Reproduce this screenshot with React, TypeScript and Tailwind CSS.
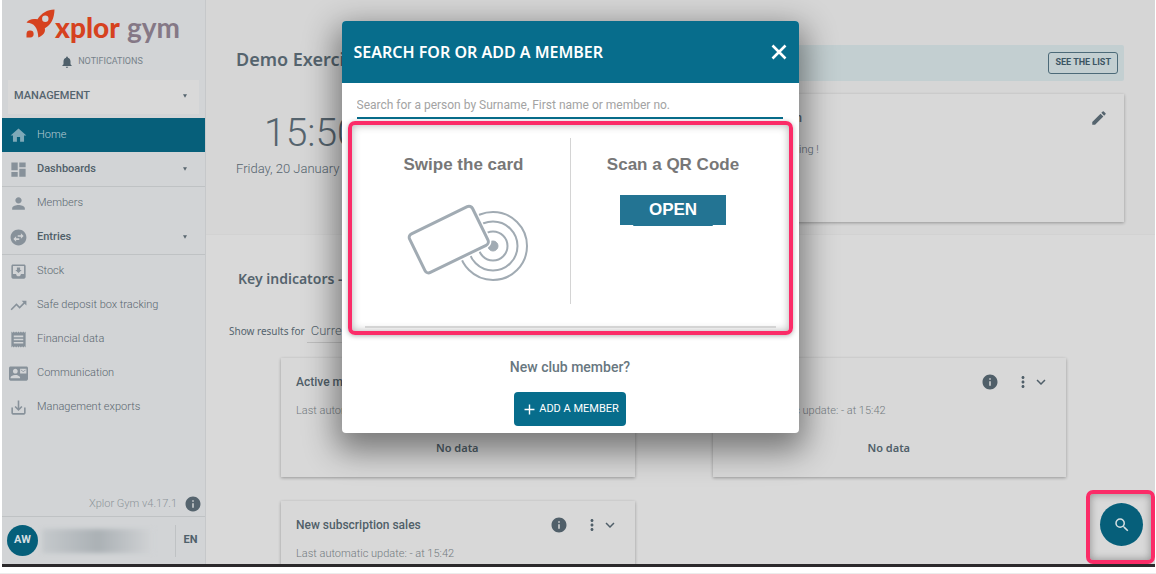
import type { ReactNode } from 'react'
import type { IconType } from 'react-icons'
import {
  MdAdd,
  MdContactMail,
  MdDashboard,
  MdEdit,
  MdExpandMore,
  MdHome,
  MdInfo,
  MdMoreVert,
  MdMoveToInbox,
  MdNotifications,
  MdPerson,
  MdReceipt,
  MdSaveAlt,
  MdSearch,
  MdSwapHorizontalCircle,
  MdTrendingUp,
} from 'react-icons/md'

type NavItem = {
  label: string
  icon: IconType
  active?: boolean
  expandable?: boolean
}

const navGroups: NavItem[][] = [
  [
    { label: 'Home', icon: MdHome, active: true },
    { label: 'Dashboards', icon: MdDashboard, expandable: true },
  ],
  [
    { label: 'Members', icon: MdPerson },
    { label: 'Entries', icon: MdSwapHorizontalCircle, expandable: true },
  ],
  [
    { label: 'Stock', icon: MdMoveToInbox },
    { label: 'Safe deposit box tracking', icon: MdTrendingUp },
    { label: 'Financial data', icon: MdReceipt },
    { label: 'Communication', icon: MdContactMail },
    { label: 'Management exports', icon: MdSaveAlt },
  ],
]

function Caret() {
  return (
    <svg viewBox="0 0 6 5" className="mr-[6px] size-1 shrink-0" fill="currentColor">
      <path d="M0 0h6L3 5z" />
    </svg>
  )
}

function Logo() {
  return (
    <div className="flex h-12 items-start pl-[23px]">
      <svg viewBox="0 0 30 30" className="mt-[9px] size-[30px] shrink-0">
        <path
          fill="#d6421f"
          fillRule="evenodd"
          d="M29.5 .5C22 .8 16.500 4 12.500 10.300C7.500 9.500 3.500 10.300 1.500 13.800C8.500 13.500 13 18.500 13.300 28.500C18 26.500 20.800 23.500 19.800 19.200C26.500 15.500 29.300 9 29.500 .5ZM20.300 6.600a3.200 3.200 0 1 1 0 6.400 3.200 3.200 0 0 1 0-6.400Z"
        />
        <path fill="#d6421f" d="M5.200 21.600A3.400 3.400 0 0 1 5.200 28.500H1.500V25A3.500 3.500 0 0 1 5.200 21.600Z" />
      </svg>
      <span className="mt-[10px] whitespace-nowrap font-['Lato'] text-[28px] leading-[34px] text-[#857886]">
        <span className="font-black text-[#d6421f]">xplor</span> <span className="font-bold">gym</span>
      </span>
    </div>
  )
}

function NavLink({ item }: { item: NavItem }) {
  const Icon = item.icon
  return (
    <li>
      <a
        href="#"
        className={
          item.active
            ? 'flex h-[34px] items-center bg-[#065f7a] pl-[7px] pr-3 text-[#b9cdd4]'
            : 'flex h-[34px] items-center pl-[7px] pr-3 text-[#5a6770]'
        }
      >
        <Icon className={item.active ? 'mr-[9px] size-[19px] text-[#7fa9b8]' : 'mr-[9px] size-[19px] text-[#87919a]'} />
        <span className={item.expandable ? 'flex-1 font-medium text-[#505f69]' : 'flex-1 font-light'}>{item.label}</span>
        {item.expandable && <Caret />}
      </a>
    </li>
  )
}

function Sidebar() {
  return (
    <aside className="flex w-[204px] shrink-0 flex-col border-r border-[#c6c8ca] bg-[#d2d4d6] text-[11px] text-[#55646e]">
      <Logo />
      <a href="#" className="flex h-7 items-center justify-center gap-1 pr-1 text-[9px] text-[#77828a]">
        <MdNotifications className="size-[14px] text-[#4f606b]" />
        NOTIFICATIONS
      </a>
      <button className="mx-[6px] mt-1 flex h-[34px] items-center justify-between bg-[#d9d9d9] pr-[6px] pb-[2px] pl-[6px] font-medium">
        MANAGEMENT
        <Caret />
      </button>
      <nav className="mt-1">
        {navGroups.map((group, i) => (
          <ul key={i} className="shadow-[0_1px_0_#bfc2c4] last:shadow-none">
            {group.map(item => (
              <NavLink key={item.label} item={item} />
            ))}
          </ul>
        ))}
      </nav>
      <div className="mt-auto flex h-6 items-center justify-end gap-[7px] pr-[3px] font-light text-[#8d949a]">
        Xplor Gym v4.17.1
        <MdInfo className="size-[18px] text-[#55646e]" />
      </div>
      <div className="flex h-12 shrink-0 items-center border-t border-[#bfc2c4] pl-[5px] text-[#4f606b]">
        <span className="flex size-[31px] items-center justify-center rounded-full bg-[#065f7a] font-bold text-[#d5dfe2]">
          AW
        </span>
        <span className="ml-1 h-6 w-28 bg-linear-to-r from-[#c5c9cc] via-[#abb1b5] to-[#d2d4d6] blur-[2px]" />
        <span className="ml-auto flex h-8 w-[30px] items-center justify-center border-l border-[#bfc2c4] font-bold">
          EN
        </span>
      </div>
    </aside>
  )
}

function IndicatorCard({ title, children }: { title: string; children?: ReactNode }) {
  return (
    <section className="h-[119px] bg-[#d8d8d8] pt-[14px] pr-4 pl-[15px] shadow-[0_1px_3px_rgba(0,0,0,0.3)]">
      <div className="flex h-5 items-center text-[#505f69]">
        <h3 className="mr-auto text-xs font-medium">{title}</h3>
        <button aria-label="Information">
          <MdInfo className="size-[18px]" />
        </button>
        <button aria-label="Options" className="ml-[15px]">
          <MdMoreVert className="size-[18px]" />
        </button>
        <button aria-label="Expand">
          <MdExpandMore className="size-[18px]" />
        </button>
      </div>
      <p className="mt-[11px] text-[11px] leading-4 font-light text-[#737b80]">Last automatic update: - at 15:42</p>
      {children}
    </section>
  )
}

function NoData() {
  return <p className="mt-[21px] text-center font-['Noto_Sans'] text-[11px] leading-4 font-semibold text-[#505f69]">No data</p>
}

function Dashboard() {
  return (
    <main className="flex min-w-0 flex-1 flex-col overflow-hidden bg-[#d9d9d9] text-[#55646e]">
      <div className="flex h-[235px] shrink-0 justify-between border-b border-[#d2d2d2] bg-[#d6d6d6] pr-[31px] pl-[30px]">
        <div className="whitespace-nowrap pt-[47px]">
          <h1 className="font-['Noto_Sans'] text-lg leading-6 font-semibold">Demo Exercise</h1>
          <p className="mt-9 pl-7 text-[39px] leading-[52px] font-light">15:50</p>
          <p className="text-[13px] leading-5 font-light">Friday, 20 January 2023</p>
        </div>
        <div className="flex w-[57%] flex-col pt-[45px]">
          <div className="flex h-9 items-center justify-end rounded-xs bg-[#c3cfd1] pr-[6px]">
            <button className="h-[22px] rounded-[3px] border border-[#4c6a78] px-[6px] text-[9px] font-bold text-[#3c5563]">
              SEE THE LIST
            </button>
          </div>
          <section className="mt-[13px] h-32 bg-[#d8d8d8] pt-[14px] pr-4 shadow-[0_1px_3px_rgba(0,0,0,0.3)]">
            <div className="flex h-5 items-center">
              <h2 className="w-[184px] text-right text-xs font-medium">Information</h2>
              <button aria-label="Edit" className="ml-auto">
                <MdEdit className="size-[18px]" />
              </button>
            </div>
            <p className="mt-3 w-[201px] text-right text-[11px] leading-5 font-light">Good morning !</p>
          </section>
        </div>
      </div>
      <h2 className="mt-8 ml-8 shrink-0 font-['Noto_Sans'] text-sm leading-6 font-semibold">Key indicators - my club</h2>
      <div className="mt-7 ml-[23px] flex h-6 shrink-0 items-center gap-[2px] font-['Noto_Sans'] text-[10px]">
        <label htmlFor="period">Show results for</label>
        <select id="period" className="h-6 w-40 appearance-none border-b border-[#bdbdbd] px-1 font-['Roboto'] text-[13px] font-light">
          <option>Current month</option>
        </select>
      </div>
      <div className="mt-[15px] mr-[89px] ml-[75px] grid grid-cols-2 gap-x-[78px] gap-y-6">
        <IndicatorCard title="Active members">
          <NoData />
        </IndicatorCard>
        <IndicatorCard title="Contracts">
          <NoData />
        </IndicatorCard>
        <IndicatorCard title="New subscription sales" />
      </div>
    </main>
  )
}

function SwipeCardDrawing() {
  return (
    <svg viewBox="0 0 124 80" className="h-20 w-[124px]" fill="none" stroke="#a1abb3">
      <circle cx="88" cy="43" r="5" fill="#a1abb3" />
      <circle cx="88" cy="43" r="14.500" strokeWidth="2" />
      <circle cx="88" cy="43" r="24.500" strokeWidth="2" />
      <circle cx="88" cy="43" r="34" strokeWidth="2" />
      <rect x="9" y="15" width="70" height="43" rx="4" stroke="#fff" strokeWidth="6" fill="#fff" transform="rotate(-26 44 37)" />
      <rect x="9" y="15" width="70" height="43" rx="4" strokeWidth="3" fill="#fff" transform="rotate(-26 44 37)" />
    </svg>
  )
}

function MemberDialog() {
  return (
    <div
      role="dialog"
      aria-labelledby="member-dialog-title"
      className="absolute top-[21px] left-1/2 w-[457px] -translate-x-[237px] rounded-[4px] bg-white font-['Roboto'] shadow-[0_12px_32px_6px_rgba(0,0,0,0.45)]"
    >
      <header className="flex h-[62px] items-center justify-between rounded-t-[4px] bg-[#076d8c] pr-2 pl-3 text-white">
        <h2 id="member-dialog-title" className="font-['Noto_Sans'] text-base font-semibold">
          SEARCH FOR OR ADD A MEMBER
        </h2>
        <button aria-label="Close">
          <svg viewBox="0 0 24 24" className="size-6" stroke="currentColor" strokeWidth="2.6">
            <path d="M5.500 5.500l13 13M18.500 5.500l-13 13" />
          </svg>
        </button>
      </header>
      <input
        aria-label="Search for a member"
        placeholder="Search for a person by Surname, First name or member no."
        className="mx-[15px] mt-[9px] block h-[27px] w-[426px] border-b-2 border-[#076d8c] text-xs placeholder:text-[#a3a3a3]"
      />
      <div className="mx-[6px] mt-[2px] flex h-[214px] flex-col rounded-[7px] border-4 border-[#fb2c68] px-[13px] pt-[13px] font-['Liberation_Sans'] shadow-[inset_0_0_9px_rgba(0,0,0,0.3),0_1px_5px_rgba(0,0,0,0.3)]">
        <div className="flex h-[166px]">
          <div className="flex w-[206px] flex-col items-center border-r border-[#d4d4d4] pt-[17px] pr-[7px]">
            <h3 className="text-[17px] leading-5 font-bold text-[#777777]">Swipe the card</h3>
            <div className="mt-7 ml-[6px]">
              <SwipeCardDrawing />
            </div>
          </div>
          <div className="flex flex-1 flex-col items-center pt-[17px]">
            <h3 className="text-[17px] leading-5 font-bold text-[#777777]">Scan a QR Code</h3>
            <button className="mt-5 h-[30px] w-[106px] bg-[#237493] text-[17px] font-bold text-white">OPEN</button>
            <span className="h-px w-20 rounded-b-xs bg-[#237493]" />
          </div>
        </div>
        <hr className="mt-[22px] border-t-2 border-[#d4d4d4]" />
      </div>
      <div className="flex flex-col items-center pt-[22px] pb-[7px]">
        <p className="text-sm leading-5 font-medium text-[#687780]">New club member?</p>
        <button className="mt-[15px] flex h-[34px] items-center gap-px rounded-[4px] bg-[#076d8c] px-[7px] text-[11px] text-white">
          <MdAdd className="size-[17px]" />
          ADD A MEMBER
        </button>
      </div>
    </div>
  )
}

export default function App() {
  return (
    <div className="flex h-screen flex-col border-b border-[#ececec] bg-white pb-[6px] font-['Roboto',sans-serif]">
      <div className="relative mr-px ml-[2px] flex min-h-0 flex-1 overflow-hidden border-b-[3px] border-[#2b292b]">
        <Sidebar />
        <Dashboard />
        <MemberDialog />
        <div className="absolute right-0 bottom-0 flex h-[74px] w-[69px] items-center justify-center rounded-[7px] border-4 border-[#fb2c68] pb-[5px] pl-[2px] shadow-[inset_0_0_9px_rgba(0,0,0,0.35)]">
          <button
            aria-label="Search"
            className="flex size-[43px] items-center justify-center rounded-full bg-[#065f7a] text-[#d5dfe2]"
          >
            <MdSearch className="size-[18px]" />
          </button>
        </div>
      </div>
    </div>
  )
}
